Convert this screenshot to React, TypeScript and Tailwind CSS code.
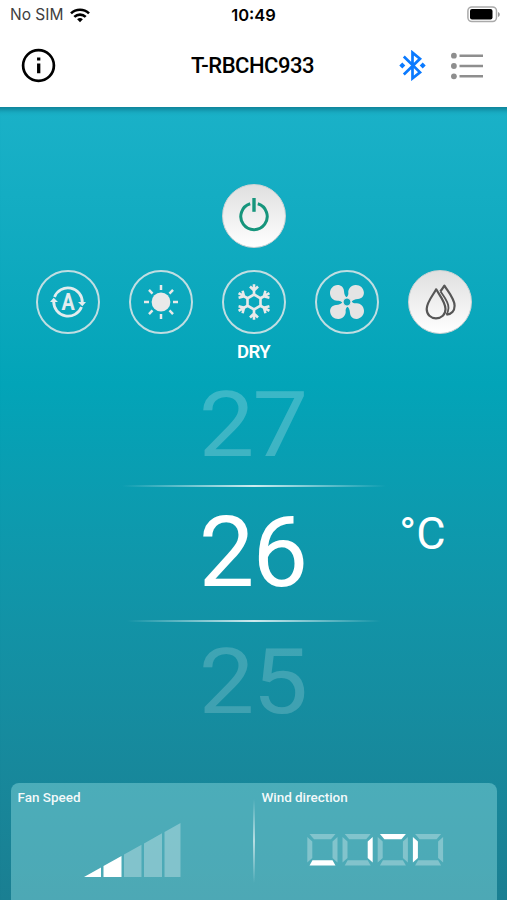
import type { ReactNode } from 'react';

function StatusBar() {
  return (
    <div className="grid h-[30px] grid-cols-[1fr_auto_1fr] items-center pl-[10px] pr-[7px] font-['Inter','Liberation_Sans',sans-serif] text-black">
      <div className="flex items-center gap-[7px]">
        <span className="text-[15.5px] leading-none text-neutral-700">No SIM</span>
        <svg viewBox="0 0 20 15" className="h-[15px] w-5" fill="none" stroke="currentColor" strokeWidth="2.6">
          <path d="M1 5.4a13 13 0 0 1 18 0" />
          <path d="M4.3 8.9a8.2 8.2 0 0 1 11.4 0" />
          <path d="M10 14.3l-2.9-3a4.2 4.2 0 0 1 5.8 0z" fill="currentColor" stroke="none" />
        </svg>
      </div>
      <span className="mr-[3px] pt-px text-center text-[16.5px] font-semibold leading-none">10:49</span>
      <svg viewBox="0 0 33 17" className="mb-[2px] h-[17px] w-[33px] justify-self-end">
        <rect x="0.9" y="0.9" width="28.6" height="14.7" rx="4" fill="none" stroke="#aaa" strokeWidth="1.5" />
        <rect x="3" y="3" width="22.5" height="10.5" rx="2" fill="#000" />
        <path d="M31 6v5c1.2-.5 1.8-1.3 1.8-2.5s-.6-2-1.8-2.5z" fill="#999" />
      </svg>
    </div>
  );
}

function Header() {
  return (
    <header className="grid h-[77px] grid-cols-[1fr_auto_1fr] items-center pb-[7px] pl-[22px] pr-[24px]">
      <button className="-ml-px w-[35px]">
        <svg viewBox="0 0 35 35" className="h-[35px] w-[35px]" fill="none">
          <circle cx="17.5" cy="17.5" r="15.4" stroke="#000" strokeWidth="2.7" />
          <path d="M17.7 9.5v3M17.7 15.5v9.8" stroke="#000" strokeWidth="3.3" />
        </svg>
      </button>
      <h1 className="pt-[2px] text-[22px] font-medium leading-none tracking-[-0.5px] text-black">T-RBCHC933</h1>
      <div className="flex items-center justify-end gap-[25px]">
        <svg viewBox="0 0 27 31" className="h-[31px] w-[27px]" fill="none" stroke="#0a7aff" strokeWidth="2.7">
          <path d="M4.8 6.5L21 22.3l-7.5 6V2.6l7.5 6.2L4.8 24.5" />
          <path d="M3.3 12.5l3 3-3 3L.3 15.5zM23.7 12.5l3 3-3 3-3-3z" fill="#0a7aff" stroke="none" />
        </svg>
        <svg viewBox="0 0 32 28" className="mt-px h-[28px] w-[32px]" fill="#8e8e8e">
          <circle cx="2.9" cy="3.7" r="2.9" />
          <circle cx="2.9" cy="14" r="2.9" />
          <circle cx="2.9" cy="24.3" r="2.9" />
          <path d="M8.5 2.4h23.5v2.6H8.5zM8.5 12.7h23.5v2.6H8.5zM8.5 23h23.5v2.6H8.5z" />
        </svg>
      </div>
    </header>
  );
}

function AutoIcon() {
  return (
    <svg viewBox="-18 -18 36 36" className="h-9 w-9" fill="none" stroke="#e3ecee" strokeWidth="2.8">
      <path d="M-13.5 -5A14.4 14.4 0 0 1 14.3 .5" />
      <path d="M13.5 5A14.4 14.4 0 0 1 -14.3 -.5" />
      <path d="M10 0h8l-3.7 4.3zM-10 0h-8l3.7 -4.3z" fill="#e3ecee" stroke="none" />
      <text x="0" y="8.3" textAnchor="middle" fontSize="24" fontWeight="700" fill="#e3ecee" stroke="none" transform="scale(.82 1)">A</text>
    </svg>
  );
}

function SunIcon() {
  return (
    <svg viewBox="-18 -18 36 36" className="h-9 w-9" stroke="#e9e9e9" strokeWidth="2.5">
      <circle r="9.4" fill="#e9e9e9" stroke="none" />
      {[0, 45, 90, 135, 180, 225, 270, 315].map((a) => (
        <path key={a} d="M0 -12v-5" transform={`rotate(${a})`} />
      ))}
    </svg>
  );
}

function SnowIcon() {
  return (
    <svg viewBox="-18 -18 36 36" className="h-9 w-9" fill="none" stroke="#e9e9e9" strokeWidth="2.6">
      <path d="M0 -7.5L6.5 -3.75V3.75L0 7.5L-6.5 3.75V-3.75Z" />
      {[0, 60, 120, 180, 240, 300].map((a) => (
        <path key={a} d="M0 -7.5V-17.8M-4 -15.5L0 -11.5L4 -15.5" transform={`rotate(${a})`} />
      ))}
    </svg>
  );
}

function FanIcon() {
  return (
    <svg viewBox="-18 -18 36 36" className="h-9 w-9" fill="#e4e4e4">
      {[0, 90, 180, 270].map((a) => (
        <path
          key={a}
          d="M.5 -4.2C-2 -5 -2.8 -8 -3 -11C-3.3 -14.8 -6 -17 -9.5 -16.9C-14 -16.6 -17.2 -13 -17 -8.5C-16.7 -4 -13 -1 -9.500 -1.3C-7.5 -1.6 -6 -1 -4.3 .8Z"
          transform={`rotate(${a})`}
        />
      ))}
      <circle r="4" fill="#11a6b9" stroke="#e4e4e4" strokeWidth="1.2" />
    </svg>
  );
}

function DropIcon() {
  return (
    <svg viewBox="-18 -18 36 36" className="h-9 w-9" fill="none" stroke="#565656" strokeWidth="2.2" strokeLinejoin="round">
      <path d="M-3.8 -12.7C-6.5 -7.5 -13.3 0 -13.3 7C-13.3 12.8 -9.3 16.3 -4 16.3C1.5 16.3 5.5 12.8 5.5 7C5.5 0 -1 -7.5 -3.8 -12.7Z" />
      <path d="M.3 -10.5C1.8 -12.5 3.2 -14.5 4.4 -16.4C7.5 -11.2 14.6 -3.5 14.6 3.8C14.6 8.7 11.5 12.3 6.5 12.7" />
      <path d="M.5 -10.5C4 -5.5 9 .5 8.5 6C8.3 8.8 7.8 11 6.3 12.7" strokeWidth="1.8" />
    </svg>
  );
}

const modes: { name: string; icon: ReactNode; active?: boolean }[] = [
  { name: 'auto', icon: <AutoIcon /> },
  { name: 'heat', icon: <SunIcon /> },
  { name: 'cool', icon: <SnowIcon /> },
  { name: 'fan', icon: <FanIcon /> },
  { name: 'dry', icon: <DropIcon />, active: true },
];

function ModeButtons() {
  return (
    <div className="mt-[22px] flex h-[64px] w-full items-center justify-between pl-[36px] pr-[35px]">
      {modes.map((m) => (
        <button
          key={m.name}
          className={
            m.active
              ? 'flex h-16 w-16 items-center justify-center rounded-full border border-[#cfd3d4] bg-linear-to-b from-[#e0e0e0] to-white'
              : 'flex h-16 w-16 items-center justify-center rounded-full border-2 border-[#d5e3e5]/90'
          }
        >
          {m.icon}
        </button>
      ))}
    </div>
  );
}

function TemperatureWheel() {
  return (
    <div className="mt-[3px] flex w-full flex-col items-center text-[99px] leading-none tracking-[-1.8px] text-white">
      <div className="flex h-[120px] items-center">
        <span className="mr-[2px] scale-y-[0.92] opacity-[0.22]">27</span>
      </div>
      <div className="h-[2px] w-[264px] bg-linear-to-r from-transparent via-white/80 to-transparent" />
      <div className="grid h-[133px] w-full grid-cols-[1fr_auto_1fr] items-center pb-[2px]">
        <span />
        <span className="mr-[2px]">26</span>
        <span className="mb-[38px] pl-[91px] text-[45px] tracking-normal">°C</span>
      </div>
      <div className="h-[2px] w-[254px] bg-linear-to-r from-transparent via-white/80 to-transparent" />
      <div className="flex h-[120px] items-center">
        <span className="mr-[2px] scale-y-[0.92] opacity-[0.18]">25</span>
      </div>
    </div>
  );
}

const fanBars = [
  'M0 54L17 44.5V54z',
  'M19.5 43L37.5 33V54H19.5z',
  'M40 31.6L57.5 21.8V54H40z',
  'M60 20.4L78 10.3V54H60z',
  'M80.5 8.9L96.5 0V54H80.5z',
];

function FanSpeed() {
  return (
    <div className="flex w-[242px] flex-col pl-[7px] pt-[6px]">
      <span className="text-[13.5px] font-medium leading-[16px] text-white/95">Fan Speed</span>
      <svg viewBox="0 0 97 54" className="ml-[66px] mt-[18px] h-[54px] w-[97px]">
        {fanBars.map((d, i) => (
          <path key={i} d={d} fill="#fff" fillOpacity={i < 2 ? 1 : 0.3} />
        ))}
      </svg>
    </div>
  );
}

const segments = {
  top: 'M2.5 0H28.5L24 5.3H7z',
  right: 'M30.5 3V28.5L25.5 24V7.5z',
  bottom: 'M2.5 31.5H28.5L25.5 26.2H5.5z',
  left: 'M.3 3V28.5L5.3 24V7.5z',
};

const louvers: (keyof typeof segments)[] = ['bottom', 'right', 'top', 'left'];

function WindDirection() {
  return (
    <div className="flex flex-1 flex-col pl-[7px] pt-[6px]">
      <span className="text-[13.5px] font-medium leading-[16px] tracking-[-0.05px] text-white/95">Wind direction</span>
      <svg viewBox="0 0 137 32" className="ml-[45px] mt-[29px] h-[32px] w-[137px]">
        {louvers.map((on, i) => (
          <g key={on} transform={`translate(${i * 35.2} 0)`}>
            {Object.entries(segments).map(([side, d]) => (
              <path key={side} d={d} fill="#fff" fillOpacity={side === on ? 1 : 0.3} />
            ))}
          </g>
        ))}
      </svg>
    </div>
  );
}

export default function App() {
  return (
    <div className="flex h-[900px] w-[507px] flex-col overflow-hidden bg-white font-['Roboto','Liberation_Sans',sans-serif]">
      <StatusBar />
      <Header />
      <main className="flex flex-1 flex-col items-center bg-linear-to-b from-[#1ab1c8] via-[#02a4b8] via-35% to-[#1a7f92] pt-[77px] shadow-[inset_0_8px_5px_-5px_rgba(0,70,90,0.45)]">
        <button className="flex h-16 w-16 items-center justify-center rounded-full border border-[#cfd3d4] bg-linear-to-b from-[#e0e0e0] to-white">
          <svg viewBox="-18 -18 36 36" className="h-9 w-9" fill="none" stroke="#16957c" strokeWidth="3">
            <path d="M-3.8 -12.2A13.2 13.2 0 1 0 3.8 -12.2" />
            <path d="M0 -18V-4.2" strokeWidth="3.4" />
          </svg>
        </button>
        <ModeButtons />
        <div className="mt-[8px] h-5 text-[18.5px] font-semibold leading-5 tracking-[-0.5px] text-white">DRY</div>
        <TemperatureWheel />
        <section className="mt-auto flex h-[117px] w-[486px] rounded-t-lg bg-[#8cdbe0]/45">
          <FanSpeed />
          <div className="mt-[16px] h-[84px] w-[2px] bg-linear-to-b from-transparent via-white/60 to-transparent" />
          <WindDirection />
        </section>
      </main>
    </div>
  );
}
